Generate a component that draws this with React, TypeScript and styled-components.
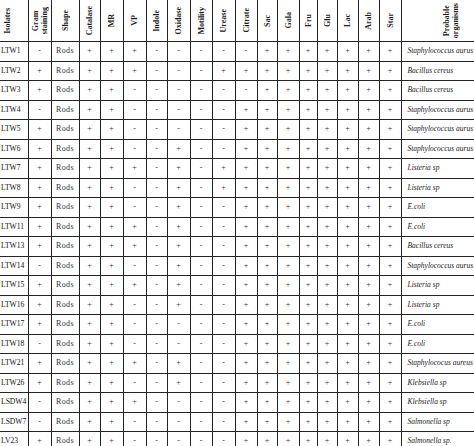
import React from 'react';
import styled, { createGlobalStyle } from 'styled-components';

const GlobalStyle = createGlobalStyle`
  html, body {
    margin: 0;
    padding: 0;
    background: #fff;
  }
`;

const Frame = styled.div`
  width: 474px;
  height: 446px;
  overflow: hidden;
  background: #fff;
`;

const Table = styled.table`
  border-collapse: collapse;
  table-layout: fixed;
  width: 501px;
  font-family: 'Liberation Serif', 'Times New Roman', serif;
  color: #1c1c1c;
`;

const HeadCell = styled.th<{ $first?: boolean }>`
  height: 41px;
  padding: 0;
  border: 1px solid #262626;
  border-top: none;
  ${(p) => (p.$first ? 'border-left: none;' : '')}
  vertical-align: middle;
`;

const HeadLabel = styled.div<{ $align?: string }>`
  display: flex;
  justify-content: ${(p) => p.$align || 'center'};
  align-items: center;
  padding-left: ${(p) => (p.$align ? '3px' : '0')};
`;

const Rotated = styled.span`
  writing-mode: vertical-rl;
  transform: rotate(180deg);
  font-size: 8px;
  font-weight: bold;
  line-height: 9px;
  text-align: center;
  white-space: nowrap;
`;

const Row = styled.tr`
  height: 19.5px;
`;

const Cell = styled.td`
  padding: 0;
  border: 1px solid #262626;
  text-align: center;
  font-size: 8px;
  line-height: 10px;
  white-space: nowrap;
  overflow: hidden;
`;

const IsolateCell = styled(Cell)`
  border-left: none;
  text-align: left;
  padding-left: 1px;
  font-size: 7.6px;
  color: #111;
`;

const ShapeCell = styled(Cell)`
  letter-spacing: 0.4px;
  color: #333;
`;

const SignCell = styled(Cell)`
  font-size: 8px;
  color: #333;
`;

const OrganismCell = styled(Cell)`
  text-align: left;
  padding-left: 6px;
  font-size: 7.5px;
  font-style: italic;
  color: #222;
`;

const widths = [28, 23, 28, 21, 23, 23, 21, 23, 22, 23, 22, 20, 22, 18, 20, 21, 21, 22, 100];

const headers = [
  'Isolates',
  'Gram\nstaining',
  'Shape',
  'Catalase',
  'MR',
  'VP',
  'Indole',
  'Oxidase',
  'Motility',
  'Urease',
  'Citrate',
  'Sac',
  'Gala',
  'Fru',
  'Glu',
  'Lac',
  'Arab',
  'Star',
  'Probable\norganisms',
];

type Isolate = {
  id: string;
  gram: string;
  tests: string; // catalase, MR, VP, indole, oxidase, motility, urease, citrate
  organism: string;
};

const rows: Isolate[] = [
  { id: 'LTW1', gram: '-', tests: '+++-----', organism: 'Staphylococcus aurus' },
  { id: 'LTW2', gram: '+', tests: '+++---++', organism: 'Bacillus cereus' },
  { id: 'LTW3', gram: '+', tests: '++------', organism: 'Bacillus cereus' },
  { id: 'LTW4', gram: '-', tests: '++-----+', organism: 'Staphylococcus aurus' },
  { id: 'LTW5', gram: '+', tests: '++-----+', organism: 'Staphylococcus aurus' },
  { id: 'LTW6', gram: '+', tests: '++--+--+', organism: 'Staphylococcus aurus' },
  { id: 'LTW7', gram: '+', tests: '+++-+-++', organism: 'Listeria sp' },
  { id: 'LTW8', gram: '+', tests: '++--+-++', organism: 'Listeria sp' },
  { id: 'LTW9', gram: '+', tests: '++--+--+', organism: 'E.coli' },
  { id: 'LTW11', gram: '+', tests: '+++-+--+', organism: 'E.coli' },
  { id: 'LTW13', gram: '+', tests: '+++-+--+', organism: 'Bacillus cereus' },
  { id: 'LTW14', gram: '-', tests: '++--+--+', organism: 'Staphylococcus aurus' },
  { id: 'LTW15', gram: '+', tests: '+++-+--+', organism: 'Listeria sp' },
  { id: 'LTW16', gram: '+', tests: '++--+--+', organism: 'Listeria sp' },
  { id: 'LTW17', gram: '+', tests: '++-----+', organism: 'E.coli' },
  { id: 'LTW18', gram: '-', tests: '++-----+', organism: 'E.coli' },
  { id: 'LTW21', gram: '+', tests: '+++-+--+', organism: 'Staphylococus aureus' },
  { id: 'LTW26', gram: '+', tests: '++--+--+', organism: 'Klebsiella sp' },
  { id: 'LSDW4', gram: '-', tests: '+++----+', organism: 'Klebsiella sp' },
  { id: 'LSDW7', gram: '-', tests: '++-----+', organism: 'Salmonella sp' },
  { id: 'LV23', gram: '+', tests: '++-----+', organism: 'Salmonella sp.' },
];

const sugars = '+++++++';

export default function App() {
  return (
    <>
      <GlobalStyle />
      <Frame>
        <Table>
          <colgroup>
            {widths.map((w, i) => (
              <col key={i} style={{ width: w }} />
            ))}
          </colgroup>
          <thead>
            <tr>
              {headers.map((h, i) => (
                <HeadCell key={h} $first={i === 0}>
                  <HeadLabel $align={i === 0 ? 'flex-start' : undefined}>
                    <Rotated>
                      {h.split('\n').map((line, j) => (
                        <React.Fragment key={j}>
                          {j > 0 && <br />}
                          {line}
                        </React.Fragment>
                      ))}
                    </Rotated>
                  </HeadLabel>
                </HeadCell>
              ))}
            </tr>
          </thead>
          <tbody>
            {rows.map((r) => (
              <Row key={r.id}>
                <IsolateCell>{r.id}</IsolateCell>
                <SignCell>{r.gram}</SignCell>
                <ShapeCell>Rods</ShapeCell>
                {(r.tests + sugars).split('').map((s, i) => (
                  <SignCell key={i}>{s}</SignCell>
                ))}
                <OrganismCell>{r.organism}</OrganismCell>
              </Row>
            ))}
          </tbody>
        </Table>
      </Frame>
    </>
  );
}
